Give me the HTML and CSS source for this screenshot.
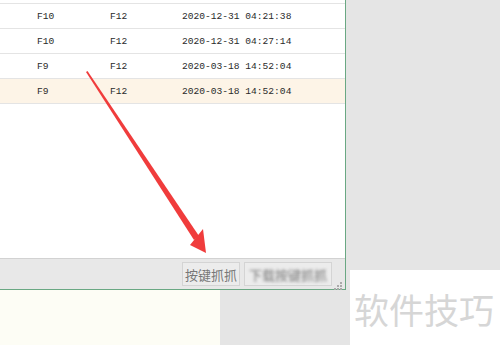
FILE: index.html
```html
<!DOCTYPE html>
<html lang="zh-CN">
<head>
  <meta charset="UTF-8" />
  <title>按键抓抓</title>
  <link rel="stylesheet" href="styles.css">
</head>
<body>

  <!-- Window -->
  <div class="window">
    <div class="list">
      <div class="row cut"></div>
      <div class="row">
        <span class="c1">F10</span><span class="c2">F12</span><span class="c3">2020-12-31 04:21:38</span>
      </div>
      <div class="row">
        <span class="c1">F10</span><span class="c2">F12</span><span class="c3">2020-12-31 04:27:14</span>
      </div>
      <div class="row">
        <span class="c1">F9</span><span class="c2">F12</span><span class="c3">2020-03-18 14:52:04</span>
      </div>
      <div class="row selected">
        <span class="c1">F9</span><span class="c2">F12</span><span class="c3">2020-03-18 14:52:04</span>
      </div>
    </div>
    <div class="toolbar">
      <button class="btn">按键抓抓</button>
      <button class="btn wide"><span class="blur">下载按键抓抓</span></button>
      <span class="grip">
        <svg width="8" height="8" viewBox="0 0 8 8">
          <rect x="6" y="0" width="2" height="2" fill="#aaa"/>
          <rect x="3" y="3" width="2" height="2" fill="#aaa"/>
          <rect x="6" y="3" width="2" height="2" fill="#aaa"/>
          <rect x="0" y="6" width="2" height="2" fill="#aaa"/>
          <rect x="3" y="6" width="2" height="2" fill="#aaa"/>
          <rect x="6" y="6" width="2" height="2" fill="#aaa"/>
        </svg>
      </span>
    </div>
  </div>

  <div class="below"></div>

  <!-- red arrow drawn over the screenshot -->
  <svg class="arrow" width="500" height="345" viewBox="0 0 500 345">
    <polygon points="86,72 87.5,71 199,236 194,240" fill="#f03c3c"/>
    <polygon points="190,245 203,229 206,253" fill="#f03c3c"/>
  </svg>

  <div class="watermark">软件技巧</div>

</body>
</html>
```

FILE: styles.css
```css
* {
  box-sizing: border-box;
}

body {
  margin: 0;
  width: 500px;
  height: 345px;
  overflow: hidden;
  position: relative;
  background: #e5e5e5;
  font-family: "Liberation Mono", "DejaVu Sans Mono", monospace;
}

.window {
  width: 346px;
  height: 290px;
  background: #fff;
  border-right: 1px solid #6aa883;
  border-bottom: 1px solid #6aa883;
  display: flex;
  flex-direction: column;
}

.list {
  flex: 1;
}

.row {
  height: 25px;
  display: flex;
  align-items: center;
  border-bottom: 1px solid #e4e4e4;
  font-size: 9.6px;
  color: #2a2a2a;
}

.row.cut {
  height: 4px;
}

.row.selected {
  background: #fdf4e7;
}

.c1 {
  margin-left: 37px;
  width: 73px;
}

.c2 {
  width: 72px;
}

.toolbar {
  height: 31px;
  background: #e8e8e8;
  border-top: 1px solid #d2d2d2;
  display: flex;
  align-items: center;
  justify-content: flex-end;
  gap: 4px;
  padding-right: 1px;
}

.btn {
  height: 24px;
  width: 58px;
  padding: 0;
  margin: 0;
  border: 1px solid #d4d4d4;
  background: #ececec;
  color: #777;
  font-family: "Noto Sans CJK SC", sans-serif;
  font-size: 13px;
}

.btn.wide {
  width: 88px;
}

.blur {
  filter: blur(1.4px);
  color: #777;
}

.grip {
  width: 10px;
  height: 10px;
  margin-left: -2px;
  align-self: flex-end;
  margin-bottom: 2px;
}

.below {
  width: 220px;
  height: 55px;
  background: #fdfdf5;
}

.arrow {
  position: absolute;
  left: 0;
  top: 0;
}

.watermark {
  position: absolute;
  left: 350px;
  top: 270px;
  width: 150px;
  height: 75px;
  background: #fff;
  color: #d6d6d6;
  font-family: "Noto Sans CJK SC", sans-serif;
  font-size: 35px;
  line-height: 1;
  padding: 21px 0 0 4px;
}
```
